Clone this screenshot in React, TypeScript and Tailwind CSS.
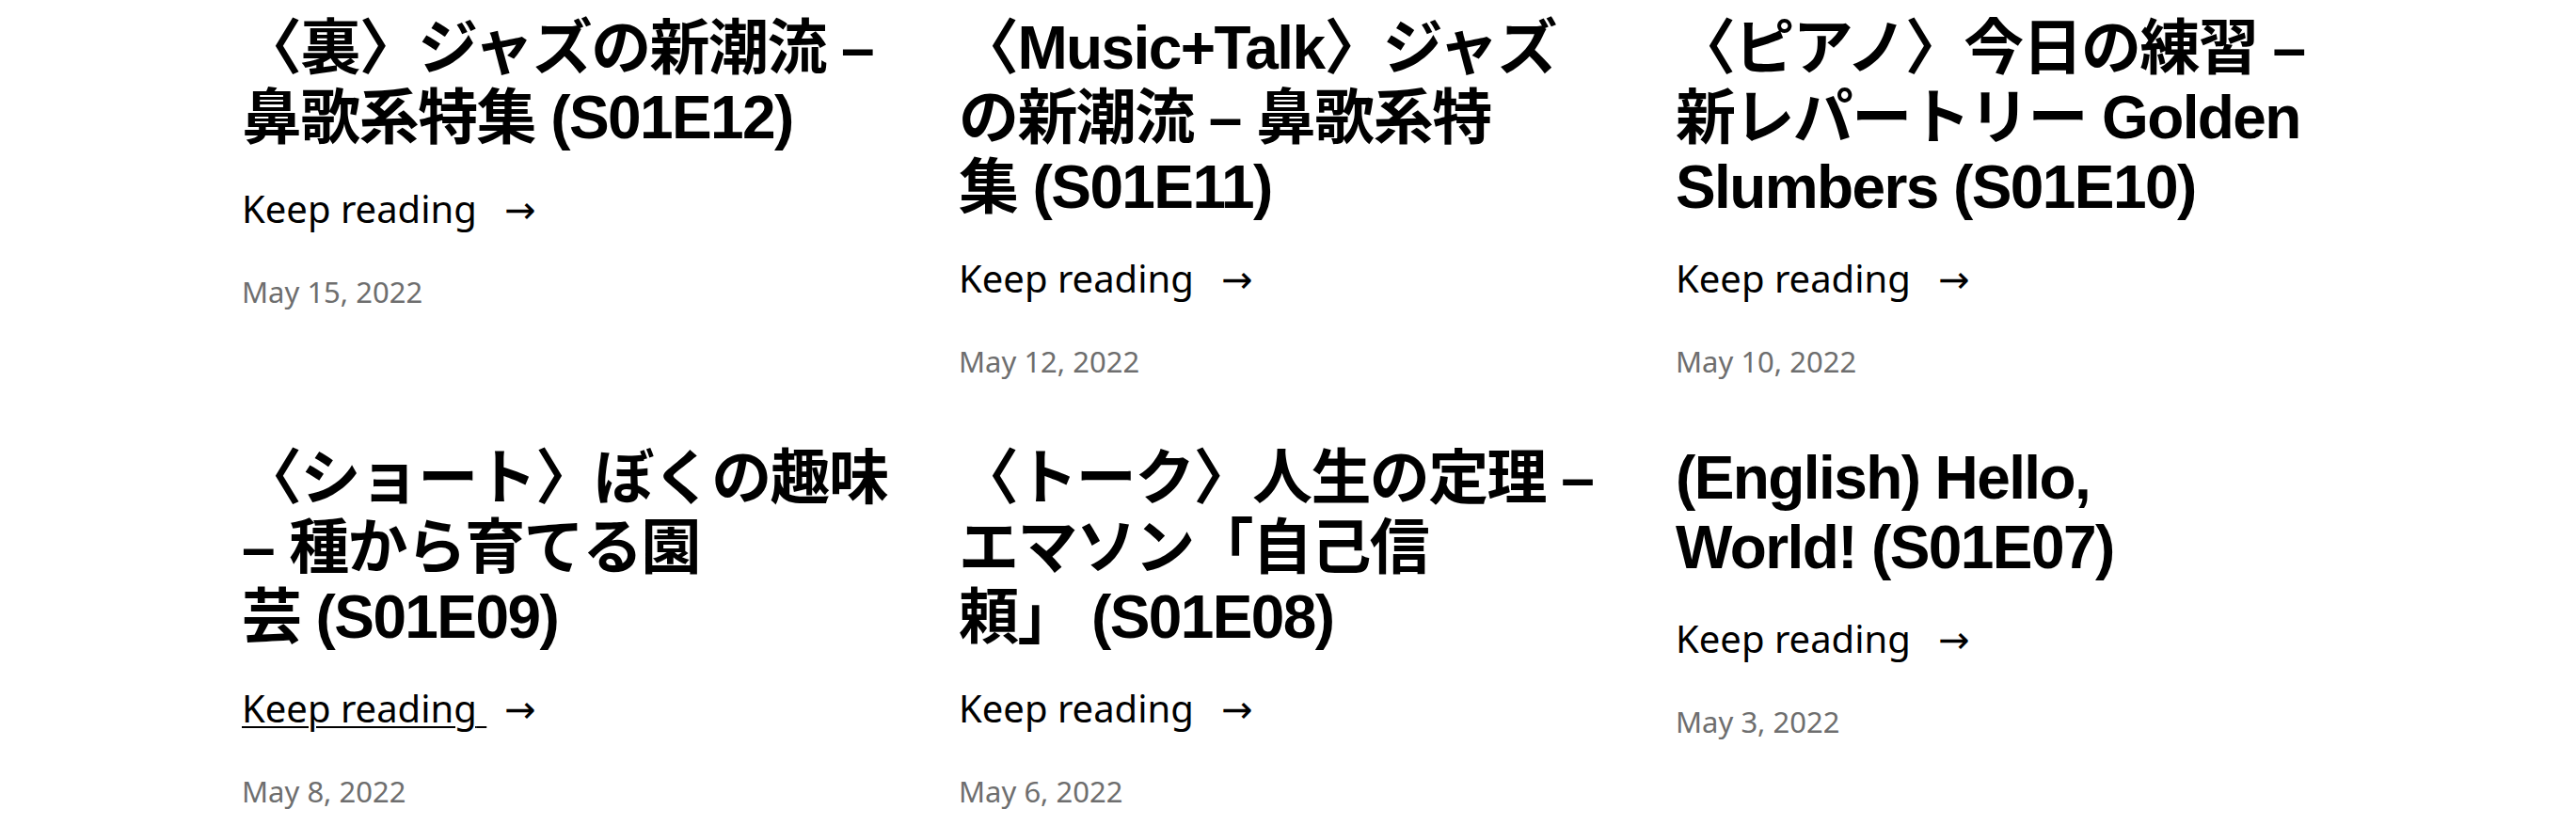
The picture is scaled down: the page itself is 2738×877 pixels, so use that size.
import React from 'react';

type Post = {
  title: string;
  date: string;
  hovered?: boolean;
};

// NBSP keeps "(S01Exx)" glued to the word before it, like the original titles
const posts: Post[] = [
  { title: '〈裏〉ジャズの新潮流 – 鼻歌系特集\u00a0(S01E12)', date: 'May 15, 2022' },
  { title: '〈Music+Talk〉ジャズの新潮流 – 鼻歌系特集\u00a0(S01E11)', date: 'May 12, 2022' },
  { title: '〈ピアノ〉今日の練習 – 新レパートリー Golden Slumbers\u00a0(S01E10)', date: 'May 10, 2022' },
  { title: '〈ショート〉ぼくの趣味 – 種から育てる園芸\u00a0(S01E09)', date: 'May 8, 2022', hovered: true },
  { title: '〈トーク〉人生の定理 – エマソン「自己信頼」\u00a0(S01E08)', date: 'May 6, 2022' },
  { title: '(English) Hello, World!\u00a0(S01E07)', date: 'May 3, 2022' },
];

const PostCard: React.FC<{ post: Post }> = ({ post }) => {
  return (
    <article className="flex flex-col">
      <h2 className="max-w-[689px] font-['Liberation_Sans','Noto_Sans_CJK_JP',sans-serif] text-[64px] font-bold leading-[74px] tracking-[-0.025em] text-black">
        {post.title}
      </h2>
      <p className="mt-[30px] font-['Noto_Sans','Noto_Sans_CJK_JP',sans-serif] text-[40px] leading-[60px] text-black">
        <a
          href="#"
          className={
            post.hovered
              ? 'underline decoration-2 underline-offset-[4px]'
              : 'no-underline'
          }
        >
          Keep reading{' '}
        </a>
        <span className="ml-[19px] font-['DejaVu_Sans',sans-serif] text-[40px]">→</span>
      </p>
      <p className="mt-[32px] font-['Noto_Sans',sans-serif] text-[31px] leading-[50px] text-[#6e6e6e]">
        {post.date}
      </p>
    </article>
  );
};

const App: React.FC = () => {
  return (
    <div className="min-h-screen bg-white">
      <div className="mx-auto grid w-[2224px] grid-cols-3 gap-x-[62px] gap-y-[62px] pt-[14px]">
        {posts.map((post) => (
          <PostCard key={post.title} post={post} />
        ))}
      </div>
    </div>
  );
};

export default App;
